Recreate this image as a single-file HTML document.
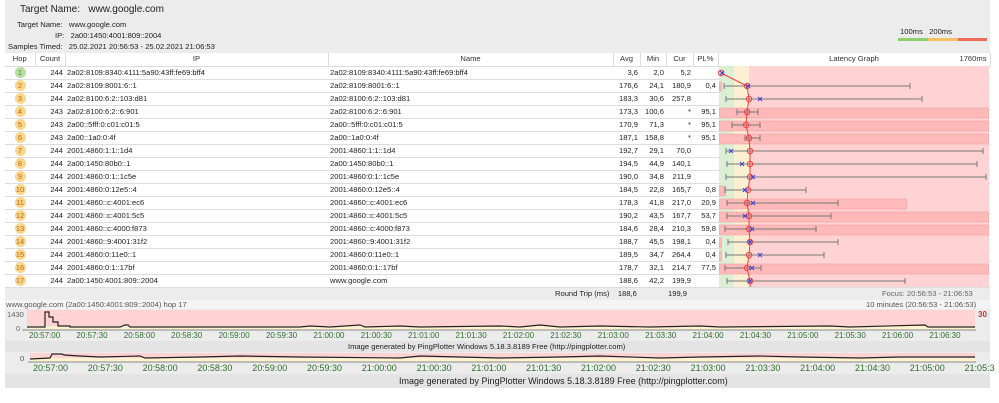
<!DOCTYPE html>
<html><head><meta charset="utf-8"><style>
*{margin:0;padding:0;box-sizing:border-box}
body{width:999px;height:403px;background:#fff;font-family:"Liberation Sans",sans-serif;font-size:8px;color:#222;position:relative;overflow:hidden}
.a{position:absolute;white-space:nowrap}
#panel{position:absolute;left:5px;top:0;width:985px;height:388px;background:#ececec}
table{position:absolute;left:5px;top:53px;width:985px;border-collapse:collapse;font-size:7.6px;table-layout:fixed}
td{height:13px;padding:0 2px;border-bottom:1px solid #ddd;white-space:nowrap;line-height:12px;overflow:hidden}
tr.h td{background:#fff;text-align:center;border-right:1px solid #ddd;color:#333}
tr.r td{background:#fff}
.c{text-align:center}.rt{text-align:right}
.hop{display:inline-block;width:11px;height:11px;border-radius:6px;background:#fcd58a;color:#b07020;text-align:center;line-height:11px;font-size:7.5px;vertical-align:top;margin-top:0}
.g{background:#b8dd9e;color:#4a8a30}
.lat{padding:0}
.gl{color:#2f6e2f;font-size:8px;display:flex}
.gl span{display:inline-block;width:47.4px}
.gl2{color:#2f6e2f;font-size:9px;display:flex}
.gl2 span{display:inline-block;width:54.8px}
</style></head><body>
<div id="panel"></div>
<div class="a" style="left:20px;top:4px;font-size:10px">Target Name:&nbsp;&nbsp; www.google.com</div>
<div class="a" style="left:17px;top:20px;font-size:7.6px">Target Name:&nbsp;&nbsp; www.google.com</div>
<div class="a" style="left:55px;top:31px;font-size:7.6px">IP:&nbsp;&nbsp; 2a00:1450:4001:809::2004</div>
<div class="a" style="left:8px;top:42px;font-size:7.6px">Samples Timed:&nbsp;&nbsp; 25.02.2021 20:56:53 - 25.02.2021 21:06:53</div>
<div class="a" style="left:900px;top:27px;font-size:7.6px">100ms&nbsp;&nbsp; 200ms</div>
<div class="a" style="left:898px;top:38px;width:30px;height:3px;background:#8fcf6a"></div>
<div class="a" style="left:928px;top:38px;width:30px;height:3px;background:#f8c060"></div>
<div class="a" style="left:958px;top:38px;width:29px;height:3px;background:#f06a5a"></div>
<table>
<colgroup><col style="width:30px"><col style="width:30px"><col style="width:263px"><col style="width:285px"><col style="width:27px"><col style="width:26px"><col style="width:27px"><col style="width:25px"><col style="width:272px"></colgroup>
<tr class="h"><td>Hop</td><td>Count</td><td>IP</td><td>Name</td><td>Avg</td><td>Min</td><td>Cur</td><td>PL%</td><td style="text-align:center;position:relative">Latency Graph<span style="position:absolute;right:3px">1760ms</span></td></tr>
<tr class="r"><td class="c"><span class="hop g">1</span></td><td class="rt">244</td><td>2a02:8109:8340:4111:5a90:43ff:fe69:bff4</td><td>2a02:8109:8340:4111:5a90:43ff:fe69:bff4</td><td class="rt">3,6</td><td class="rt">2,0</td><td class="rt">5,2</td><td class="rt"></td><td class="lat"></td></tr>
<tr class="r"><td class="c"><span class="hop">2</span></td><td class="rt">244</td><td>2a02:8109:8001:6::1</td><td>2a02:8109:8001:6::1</td><td class="rt">176,6</td><td class="rt">24,1</td><td class="rt">180,9</td><td class="rt">0,4</td><td class="lat"></td></tr>
<tr class="r"><td class="c"><span class="hop">3</span></td><td class="rt">244</td><td>2a02:8100:6:2::103:d81</td><td>2a02:8100:6:2::103:d81</td><td class="rt">183,3</td><td class="rt">30,6</td><td class="rt">257,8</td><td class="rt"></td><td class="lat"></td></tr>
<tr class="r"><td class="c"><span class="hop">4</span></td><td class="rt">243</td><td>2a02:8100:6:2::6:901</td><td>2a02:8100:6:2::6:901</td><td class="rt">173,3</td><td class="rt">100,6</td><td class="rt">*</td><td class="rt">95,1</td><td class="lat"></td></tr>
<tr class="r"><td class="c"><span class="hop">5</span></td><td class="rt">243</td><td>2a00::5fff:0:c01:c01:5</td><td>2a00::5fff:0:c01:c01:5</td><td class="rt">170,9</td><td class="rt">71,3</td><td class="rt">*</td><td class="rt">95,1</td><td class="lat"></td></tr>
<tr class="r"><td class="c"><span class="hop">6</span></td><td class="rt">243</td><td>2a00::1a0:0:4f</td><td>2a00::1a0:0:4f</td><td class="rt">187,1</td><td class="rt">158,8</td><td class="rt">*</td><td class="rt">95,1</td><td class="lat"></td></tr>
<tr class="r"><td class="c"><span class="hop">7</span></td><td class="rt">244</td><td>2001:4860:1:1::1d4</td><td>2001:4860:1:1::1d4</td><td class="rt">192,7</td><td class="rt">29,1</td><td class="rt">70,0</td><td class="rt"></td><td class="lat"></td></tr>
<tr class="r"><td class="c"><span class="hop">8</span></td><td class="rt">244</td><td>2a00:1450:80b0::1</td><td>2a00:1450:80b0::1</td><td class="rt">194,5</td><td class="rt">44,9</td><td class="rt">140,1</td><td class="rt"></td><td class="lat"></td></tr>
<tr class="r"><td class="c"><span class="hop">9</span></td><td class="rt">244</td><td>2001:4860:0:1::1c5e</td><td>2001:4860:0:1::1c5e</td><td class="rt">190,0</td><td class="rt">34,8</td><td class="rt">211,9</td><td class="rt"></td><td class="lat"></td></tr>
<tr class="r"><td class="c"><span class="hop">10</span></td><td class="rt">244</td><td>2001:4860:0:12e5::4</td><td>2001:4860:0:12e5::4</td><td class="rt">184,5</td><td class="rt">22,8</td><td class="rt">165,7</td><td class="rt">0,8</td><td class="lat"></td></tr>
<tr class="r"><td class="c"><span class="hop">11</span></td><td class="rt">244</td><td>2001:4860::c:4001:ec6</td><td>2001:4860::c:4001:ec6</td><td class="rt">178,3</td><td class="rt">41,8</td><td class="rt">217,0</td><td class="rt">20,9</td><td class="lat"></td></tr>
<tr class="r"><td class="c"><span class="hop">12</span></td><td class="rt">244</td><td>2001:4860::c:4001:5c5</td><td>2001:4860::c:4001:5c5</td><td class="rt">190,2</td><td class="rt">43,5</td><td class="rt">167,7</td><td class="rt">53,7</td><td class="lat"></td></tr>
<tr class="r"><td class="c"><span class="hop">13</span></td><td class="rt">244</td><td>2001:4860::c:4000:f873</td><td>2001:4860::c:4000:f873</td><td class="rt">184,6</td><td class="rt">28,4</td><td class="rt">210,3</td><td class="rt">59,8</td><td class="lat"></td></tr>
<tr class="r"><td class="c"><span class="hop">14</span></td><td class="rt">244</td><td>2001:4860::9:4001:31f2</td><td>2001:4860::9:4001:31f2</td><td class="rt">188,7</td><td class="rt">45,5</td><td class="rt">198,1</td><td class="rt">0,4</td><td class="lat"></td></tr>
<tr class="r"><td class="c"><span class="hop">15</span></td><td class="rt">244</td><td>2001:4860:0:11e0::1</td><td>2001:4860:0:11e0::1</td><td class="rt">189,5</td><td class="rt">34,7</td><td class="rt">264,4</td><td class="rt">0,4</td><td class="lat"></td></tr>
<tr class="r"><td class="c"><span class="hop">16</span></td><td class="rt">244</td><td>2001:4860:0:1::17bf</td><td>2001:4860:0:1::17bf</td><td class="rt">178,7</td><td class="rt">32,1</td><td class="rt">214,7</td><td class="rt">77,5</td><td class="lat"></td></tr>
<tr class="r"><td class="c"><span class="hop">17</span></td><td class="rt">244</td><td>2a00:1450:4001:809::2004</td><td>www.google.com</td><td class="rt">188,6</td><td class="rt">42,2</td><td class="rt">199,9</td><td class="rt"></td><td class="lat"></td></tr>
</table>
<svg class="a" style="left:0;top:0" width="999" height="403">
<rect x="719" y="66" width="15" height="221" fill="#dcefd4"/>
<rect x="734" y="66" width="15" height="221" fill="#fdf0d2"/>
<rect x="749" y="66" width="240" height="221" fill="#ffd3d3"/>
<g fill="#ffb9b9" stroke="#f0a0a0" stroke-width=".6">
<rect x="719.5" y="82" width="2" height="9"/>
<rect x="719.5" y="108" width="269" height="10"/><rect x="719.5" y="121" width="269" height="10"/><rect x="719.5" y="134" width="269" height="10"/>
<rect x="719.5" y="186" width="6" height="10"/><rect x="719.5" y="199" width="187" height="10"/><rect x="719.5" y="212" width="269" height="10"/>
<rect x="719.5" y="225" width="269" height="10"/><rect x="719.5" y="238" width="2" height="10"/><rect x="719.5" y="251" width="2" height="10"/>
<rect x="719.5" y="264" width="269" height="10"/></g>
<g stroke="#777" stroke-width="1">
<path d="M724 86H910M724 83v6M910 83v6"/><path d="M726 99H922M726 96v6M922 96v6"/>
<path d="M737 112H758M737 109v6M758 109v6"/><path d="M732 125H760M732 122v6M760 122v6"/><path d="M745 138H760M745 135v6M760 135v6"/>
<path d="M726 151H983M726 148v6M983 148v6"/><path d="M727 164H977M727 161v6M977 161v6"/><path d="M726 177H986M726 174v6M986 174v6"/>
<path d="M725 190H806M725 187v6M806 187v6"/><path d="M727 203H838M727 200v6M838 200v6"/><path d="M727 216H831M727 213v6M831 213v6"/>
<path d="M725 229H816M725 226v6M816 226v6"/><path d="M728 242H838M728 239v6M838 239v6"/><path d="M726 255H824M726 252v6M824 252v6"/>
<path d="M725 268H761M725 265v6M761 265v6"/><path d="M727 281H905M727 278v6M905 278v6"/></g>
<polyline fill="none" stroke="#f04040" stroke-width="1" points="721,73 747,86 749,99 747,112 746,125 749,138 750,151 750,164 750,177 748,190 747,203 749,216 749,229 750,242 749,255 747,268 750,281 750,287"/>
<g fill="none" stroke="#f04040" stroke-width="1"><circle cx="721" cy="73" r="2.7"/><circle cx="747" cy="86" r="2.7"/><circle cx="749" cy="99" r="2.7"/><circle cx="747" cy="112" r="2.7"/><circle cx="746" cy="125" r="2.7"/><circle cx="749" cy="138" r="2.7"/><circle cx="750" cy="151" r="2.7"/><circle cx="750" cy="164" r="2.7"/><circle cx="750" cy="177" r="2.7"/><circle cx="748" cy="190" r="2.7"/><circle cx="747" cy="203" r="2.7"/><circle cx="749" cy="216" r="2.7"/><circle cx="749" cy="229" r="2.7"/><circle cx="750" cy="242" r="2.7"/><circle cx="749" cy="255" r="2.7"/><circle cx="747" cy="268" r="2.7"/><circle cx="750" cy="281" r="2.7"/></g>
<g stroke="#4040e0" stroke-width="1">
<path d="M720 71l4 4M724 71l-4 4"/><path d="M746 84l4 4M750 84l-4 4"/><path d="M758 97l4 4M762 97l-4 4"/>
<path d="M729 149l4 4M733 149l-4 4"/><path d="M740 162l4 4M744 162l-4 4"/><path d="M751 175l4 4M755 175l-4 4"/>
<path d="M743 188l4 4M747 188l-4 4"/><path d="M751 201l4 4M755 201l-4 4"/><path d="M743 214l4 4M747 214l-4 4"/>
<path d="M750 227l4 4M754 227l-4 4"/><path d="M748 240l4 4M752 240l-4 4"/><path d="M758 253l4 4M762 253l-4 4"/>
<path d="M750 266l4 4M754 266l-4 4"/><path d="M748 279l4 4M752 279l-4 4"/></g>
<rect x="27" y="310" width="948" height="20" fill="#ffd3d3"/>
<rect x="27" y="326" width="948" height="4" fill="#fdf3d0"/>
<polyline fill="none" stroke="#222" stroke-width="1.2" points="27,327 45,327 45,312 49,312 49,317 53,317 53,322 58,322 58,326 70,326 70,327 120,327 125,325 128,325 130,327 300,327 310,326 330,327 360,325 365,327 400,326 420,327 500,326 520,327 540,325 560,327 600,326 650,327 700,326 720,327 830,326 850,327 925,325 928,327 975,327"/>
<path d="M22 330H976" stroke="#888"/>
<rect x="30" y="353" width="945" height="9" fill="#ffd3d3"/>
<rect x="30" y="358" width="945" height="4" fill="#fdf3d0"/>
<polyline fill="none" stroke="#222" stroke-width="1.2" points="30,359 50,358 52,354 62,354 64,355 80,356 100,357 140,356 145,358 200,357 240,356 300,357 400,358 420,356 460,357 500,358 560,357 600,356 660,358 700,357 760,356 800,357 860,358 900,357 975,357"/>
<path d="M28 362H976" stroke="#888"/>
</svg>
<div class="a" style="left:555px;top:289px;font-size:7.6px">Round Trip (ms)&nbsp;&nbsp;&nbsp; 188,6</div>
<div class="a" style="left:668px;top:289px;font-size:7.6px">199,9</div>
<div class="a" style="left:882px;top:289px;font-size:7.6px;color:#666">Focus: 20:56:53 - 21:06:53</div>
<div class="a" style="left:5px;top:300px;width:985px;height:9px;background:#f4f4f4"></div>
<div class="a" style="left:6px;top:300px;font-size:7.6px;color:#555">www.google.com (2a00:1450:4001:809::2004) hop 17</div>
<div class="a" style="left:866px;top:300px;font-size:7.6px;color:#555">10 minutes (20:56:53 - 21:06:53)</div>
<div class="a" style="left:7px;top:310px;font-size:7.6px;color:#666">1430</div>
<div class="a" style="left:16px;top:324px;font-size:7.6px;color:#666">0</div>
<div class="a" style="left:978px;top:310px;font-size:8px;color:#d03030;font-weight:bold">30</div>
<div class="a gl" style="left:29px;top:331px"><span>20:57:00</span><span>20:57:30</span><span>20:58:00</span><span>20:58:30</span><span>20:59:00</span><span>20:59:30</span><span>21:00:00</span><span>21:00:30</span><span>21:01:00</span><span>21:01:30</span><span>21:02:00</span><span>21:02:30</span><span>21:03:00</span><span>21:03:30</span><span>21:04:00</span><span>21:04:30</span><span>21:05:00</span><span>21:05:30</span><span>21:06:00</span><span>21:06:30</span></div>
<div class="a" style="left:5px;top:341px;width:985px;height:11px;background:#e4e4e4"></div>
<div class="a" style="left:348px;top:342px;font-size:7.6px">Image generated by PingPlotter Windows 5.18.3.8189 Free (http://pingplotter.com)</div>
<div class="a" style="left:20px;top:354px;font-size:7.6px;color:#555">0</div>
<div class="a gl2" style="left:33px;top:363px"><span>20:57:00</span><span>20:57:30</span><span>20:58:00</span><span>20:58:30</span><span>20:59:00</span><span>20:59:30</span><span>21:00:00</span><span>21:00:30</span><span>21:01:00</span><span>21:01:30</span><span>21:02:00</span><span>21:02:30</span><span>21:03:00</span><span>21:03:30</span><span>21:04:00</span><span>21:04:30</span><span>21:05:00</span><span>21:05:3</span></div>
<div class="a" style="left:5px;top:374px;width:985px;height:14px;background:#e4e4e4"></div>
<div class="a" style="left:399px;top:376px;font-size:9px">Image generated by PingPlotter Windows 5.18.3.8189 Free (http://pingplotter.com)</div>
</body></html>
